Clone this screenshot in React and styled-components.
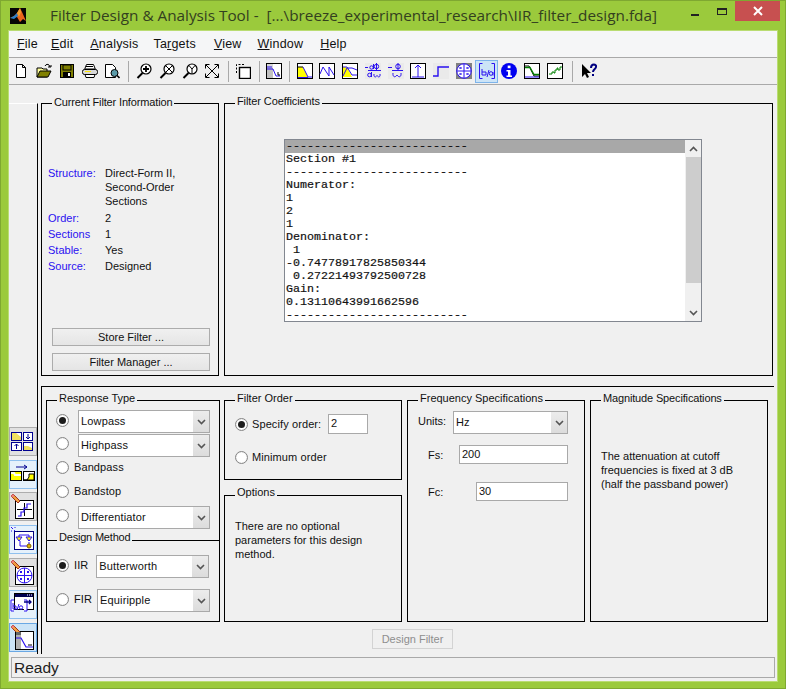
import React from "react";
import styled, { createGlobalStyle } from "styled-components";

const GlobalStyle = createGlobalStyle`
  html, body { margin: 0; padding: 0; background: #9bca3c; }
  body { font-family: "Liberation Sans", Arial, sans-serif; font-size: 11px; color: #111; }
`;

const BLUE = "#2a10f0";

const Frame = styled.div`
  width: 786px;
  height: 689px;
  box-sizing: border-box;
  background: #9bca3c;
  border: 1px solid #7fa831;
  display: flex;
  flex-direction: column;
  overflow: hidden;
`;

const TitleBar = styled.div`
  height: 29px;
  flex: none;
  display: flex;
  align-items: flex-start;
  padding-left: 9px;
`;

const Logo = styled.svg`
  margin-top: 7px;
  flex: none;
`;

const TitleText = styled.div`
  margin-left: 24px;
  margin-top: 3px;
  font-family: "Open Sans", sans-serif;
  font-size: 15.3px;
  line-height: 22px;
  color: #33401f;
  white-space: pre;
  flex: 1;
`;

const Controls = styled.div`
  display: flex;
  align-items: flex-start;
  margin-right: 5px;
`;

const Minimize = styled.div`
  width: 8px;
  height: 2px;
  background: #222;
  margin: 13px 18px 0 0;
`;

const Maximize = styled.div`
  width: 8px;
  height: 4px;
  border: 1px solid #222;
  border-top-width: 2px;
  margin: 7px 8px 0 0;
`;

const CloseBox = styled.div`
  width: 45px;
  height: 20px;
  background: #c75050;
  display: flex;
  align-items: center;
  justify-content: center;
`;

const Client = styled.div`
  flex: 1;
  margin: 0 7px 6px 7px;
  border: 1px solid #b9dc72;
  background: #f0f0f0;
  display: flex;
  flex-direction: column;
  min-height: 0;
`;

const MenuBar = styled.div`
  height: 26px;
  flex: none;
  display: flex;
  align-items: center;
  background: #f5f6f7;
  border-bottom: 1px solid #a9a9a9;
  font-size: 12.5px;
  color: #111;
`;

const MenuItem = styled.span`
  margin-left: ${(p) => p.$left}px;
  letter-spacing: 0.2px;
`;

const ToolBar = styled.div`
  height: 26px;
  flex: none;
  display: flex;
  align-items: center;
  padding-left: 1px;
  border-bottom: 1px solid #a9a9a9;
`;

const ToolButton = styled.div`
  width: 22.75px;
  height: 23px;
  box-sizing: border-box;
  flex: none;
  display: flex;
  align-items: center;
  justify-content: center;
  border: 1px solid ${(p) => (p.$active ? "#7eb4ea" : "transparent")};
  background: ${(p) => (p.$active ? "#cce4f7" : "transparent")};
`;

const ToolSep = styled.div`
  width: 1px;
  height: 21px;
  flex: none;
  background: #a9a9a9;
  margin-left: ${(p) => p.$before}px;
  margin-right: ${(p) => p.$after}px;
`;

const Body = styled.div`
  flex: 1;
  display: flex;
  padding-top: 18px;
  min-height: 0;
`;

const SideRail = styled.div`
  width: 28px;
  height: 548px;
  padding-bottom: 2px;
  flex: none;
  border-top: 1px solid #fff;
  border-right: 1px solid #000;
  box-sizing: content-box;
  display: flex;
  flex-direction: column;
  justify-content: flex-end;
  gap: 3.67px;
`;

const SideButton = styled.div`
  width: 28px;
  height: 29px;
  box-sizing: border-box;
  flex: none;
  border: 1px solid ${(p) => (p.$strong ? "#6aa8e4" : p.$active ? "#8fc0ee" : "#adadad")};
  background: ${(p) => (p.$strong ? "#cce4f7" : p.$active ? "#e5f1fb" : "#e1e1e1")};
  display: flex;
  align-items: center;
  justify-content: center;
`;

const Content = styled.div`
  margin-left: 3px;
  width: 733px;
  display: flex;
  flex-direction: column;
`;

const TopRow = styled.div`
  display: grid;
  grid-template-columns: 178px 549px;
  column-gap: 5px;
  height: 273px;
`;

const Panel = styled.div`
  position: relative;
  box-sizing: border-box;
  border: 1px solid #000;
  display: flex;
  flex-direction: column;
`;

const PanelTitle = styled.span`
  position: absolute;
  top: ${(p) => p.$top ?? -10}px;
  left: 10px;
  padding: 0 2px;
  background: #f0f0f0;
  line-height: 14px;
  white-space: nowrap;
  letter-spacing: ${(p) => p.$spacing || 0}px;
`;

const InfoPanel = styled(Panel)`
  padding: 62px 8px 4px 6px;
`;

const InfoGrid = styled.div`
  display: grid;
  grid-template-columns: 57px 1fr;
  row-gap: 2px;
  line-height: 14px;
`;

const InfoLabel = styled.span`
  color: ${BLUE};
`;

const InfoValue = styled.span`
  margin-bottom: ${(p) => p.$after || 0}px;
`;

const ActionButton = styled.div`
  width: 158px;
  height: 18px;
  margin-left: 4px;
  margin-top: ${(p) => p.$top};
  box-sizing: border-box;
  border: 1px solid #acacac;
  background: linear-gradient(#f0f0f0, #e5e5e5);
  display: flex;
  align-items: center;
  justify-content: center;
`;

const CoeffPanel = styled(Panel)`
  padding: 35px 0 0 59px;
`;

const ListBox = styled.div`
  width: 418px;
  height: 183px;
  box-sizing: border-box;
  border: 1px solid #828790;
  background: #fff;
  display: flex;
`;

const ListRows = styled.div`
  flex: 1;
  min-width: 0;
`;

const ListRow = styled.div`
  height: 13px;
  line-height: 13px;
  padding-left: 1px;
  font-family: "Liberation Mono", "Courier New", monospace;
  font-size: 11.67px;
  font-weight: 400;
  -webkit-text-stroke: 0.2px #111;
  white-space: pre;
  background: ${(p) => (p.$selected ? "#a8a8a8" : "transparent")};
`;

const ScrollBar = styled.div`
  width: 16px;
  flex: none;
  background: #f0f0f0;
  display: flex;
  flex-direction: column;
  align-items: center;
`;

const ScrollArrow = styled.div`
  height: 17px;
  flex: none;
  display: flex;
  align-items: center;
  justify-content: center;
  margin-top: ${(p) => p.$top || 0}px;
`;

const ScrollThumb = styled.div`
  width: 15px;
  height: 127px;
  background: #cdcdcd;
`;

const DesignPanel = styled.div`
  margin-top: 10px;
  flex: 1;
  box-sizing: border-box;
  border-top: 1px solid #000;
  border-left: 1px solid #000;
  padding: 13px 0 0 4px;
  width: 733px;
`;

const DesignGrid = styled.div`
  display: grid;
  grid-template-columns: 173px repeat(3, 178px);
  column-gap: 5px;
  height: 222px;
  margin-right: 5px;
`;

const ResponseBox = styled(Panel)`
  margin-right: -1px;
`;

const ResponseRows = styled.div`
  height: 140px;
  box-sizing: border-box;
  flex: none;
  padding: 9px 0 0 9px;
  display: flex;
  flex-direction: column;
  gap: 1px;
  border-bottom: 1px solid #000;
`;

const RadioRow = styled.div`
  height: 23px;
  display: flex;
  align-items: flex-start;
  line-height: 19px;
`;

const MethodRow = styled(RadioRow)`
  line-height: 21px;
`;

const Radio = styled.span`
  width: 13px;
  height: 13px;
  box-sizing: border-box;
  flex: none;
  margin-top: ${(p) => p.$top ?? 3}px;
  border-radius: 50%;
  border: 1px solid #858585;
  background: #fff;
  box-shadow: inset 0 0 1px #bbb;
  display: flex;
  align-items: center;
  justify-content: center;

  &::after {
    content: "";
    display: ${(p) => (p.$on ? "block" : "none")};
    width: 7px;
    height: 7px;
    border-radius: 50%;
    background: #1c1c1c;
  }
`;

const RadioLabel = styled.span`
  margin-left: 5px;
  letter-spacing: 0.1px;
`;

const Select = styled.div`
  width: ${(p) => p.$w}px;
  height: 23px;
  margin-left: ${(p) => p.$left || 0}px;
  box-sizing: border-box;
  flex: none;
  border: 1px solid #a9a9a9;
  background: #fff;
  display: flex;
  align-items: center;
  padding-left: 2px;
  line-height: 20px;
`;

const SelectText = styled.span`
  flex: 1;
  padding-bottom: 1px;
  letter-spacing: 0.15px;
`;

const SelectArrow = styled.span`
  width: 16px;
  height: 100%;
  background: linear-gradient(#ececec, #dcdcdc);
  display: flex;
  align-items: center;
  justify-content: center;
`;

const MethodSection = styled.div`
  position: relative;
  padding: 14px 0 0 9px;
  display: flex;
  flex-direction: column;
  gap: 11px;
`;

const MiddleColumn = styled.div`
  display: flex;
  flex-direction: column;
  gap: 15px;
`;

const OrderBox = styled(Panel)`
  height: 80px;
  padding: 13px 0 0 10px;
  gap: 13px;
`;

const OrderRow = styled.div`
  height: 20px;
  display: flex;
  align-items: center;
`;

const OrderLabel = styled.span`
  margin-left: 4px;
  width: 76px;
  letter-spacing: 0.1px;
`;

const TextInput = styled.div`
  width: ${(p) => p.$w}px;
  height: ${(p) => p.$h}px;
  box-sizing: border-box;
  flex: none;
  border: 1px solid #a9a9a9;
  background: #fff;
  padding-left: 2px;
  line-height: 16px;
`;

const NoteBox = styled(Panel)`
  flex: 1;
  padding: ${(p) => p.$top}px 4px 0 10px;
  line-height: 14px;
`;

const FreqBox = styled(Panel)`
  padding: 10px 16px 0 10px;
`;

const FreqRow = styled.div`
  display: flex;
  justify-content: space-between;
  align-items: flex-start;
  margin-top: ${(p) => p.$top || 0}px;
`;

const FreqLabel = styled.span`
  margin-left: ${(p) => p.$left || 0}px;
  margin-top: ${(p) => p.$drop}px;
  line-height: 14px;
`;

const ButtonRow = styled.div`
  padding: 7px 0 0 326px;
`;

const DisabledButton = styled.div`
  width: 81px;
  height: 20px;
  box-sizing: border-box;
  border: 1px solid #d3d3d3;
  color: #8e8e8e;
  display: flex;
  align-items: center;
  justify-content: center;
`;

const StatusBar = styled.div`
  flex: none;
  height: 21px;
  box-sizing: border-box;
  margin: 3px 2px 3px 2px;
  border: 1px solid #a9a9a9;
  font-size: 15.5px;
  line-height: 19px;
  padding-left: 2px;
  color: #222;
`;

const IconSvg = styled.svg`
  display: block;
  flex: none;
`;

const Ico = ({ children }) => (
  <IconSvg width={16} height={16} viewBox="0 0 16 16" fill="none">
    {children}
  </IconSvg>
);

// side icons are drawn in button coordinates, the 1px border is taken off here
const SideIco = ({ children }) => (
  <IconSvg width={26} height={27} viewBox="1 1 26 27" fill="none">
    {children}
  </IconSvg>
);

const Box = () => <rect x="0.5" y="0.5" width="15" height="15" fill="#fff" stroke="#000" />;

const Chevron = ({ up }) => (
  <svg width="9" height="6" viewBox="0 0 9 6" fill="none">
    <path d={up ? "M1 5l3.5-3.5L8 5" : "M1 1l3.5 3.5L8 1"} stroke="#555" strokeWidth="1.6" />
  </svg>
);

const Lens = ({ children }) => (
  <>
    <circle cx="10" cy="6" r="5" fill="#fff" stroke="#000" strokeWidth="1.2" />
    <path d="M6.5 10L1.5 15" stroke="#000" strokeWidth="2" />
    {children}
  </>
);

const toolIcons = {
  file: <path d="M3.5 1.5h6l3 3v10h-9zM9.5 1.5v3h3" fill="#fff" stroke="#000" />,
  open: (
    <>
      <path d="M1 14V5h5l1 1h4v8z" fill="#ffff9c" stroke="#000" />
      <path d="M1 14l3-6h11l-3 6z" fill="#808000" stroke="#000" />
      <path d="M9 3c1-2 3-2 4-1l1 2M12 4h3V2" stroke="#000" />
    </>
  ),
  save: (
    <>
      <rect x="1.5" y="1.5" width="13" height="13" fill="#808000" stroke="#000" />
      <rect x="4" y="2" width="8" height="5" fill="#808000" stroke="#000" />
      <rect x="4" y="9" width="8" height="5" fill="#000" />
      <rect x="9" y="10" width="2" height="3" fill="#fff" />
    </>
  ),
  print: (
    <>
      <path d="M4.5 1.5h7l2 5h-11z" fill="#fff" stroke="#000" />
      <path d="M3 6h10M4 3.5h7" stroke="#000" />
      <rect x="0.5" y="6.5" width="15" height="5" rx="2" fill="#d8d8d8" stroke="#000" />
      <path d="M3 11.5h10l-1 3H4z" fill="#fff" stroke="#000" />
      <path d="M3 8.5h6" stroke="#ffe600" />
    </>
  ),
  preview: (
    <>
      <path d="M1.5 1.5h7l3 3v10h-10z" fill="#fff" stroke="#000" />
      <circle cx="10.5" cy="10" r="3.5" fill="#5a9aa8" stroke="#000" />
      <path d="M13 12.5l2.5 2.5" stroke="#000" strokeWidth="1.6" />
    </>
  ),
  zoomPlus: (
    <Lens>
      <path d="M7 6h6M10 3v6" stroke="#000" strokeWidth="1.8" />
    </Lens>
  ),
  zoomX: (
    <Lens>
      <path d="M7 3l6 6M13 3l-6 6" stroke="#000" />
    </Lens>
  ),
  zoomY: (
    <Lens>
      <path d="M7 2.5l3 3.5 3-3.5M10 6v5" stroke="#000" />
    </Lens>
  ),
  full: (
    <path
      d="M2 2l12 12M14 2L2 14M1.5 5.5v-4h4M10.5 1.5h4v4M1.5 10.5v4h4M14.5 10.5v4h-4"
      stroke="#000"
    />
  ),
  copy: (
    <>
      <path d="M1.5 10V1.5H10" stroke="#000" strokeDasharray="2 1.5" />
      <rect x="4.5" y="4.5" width="11" height="11" fill="#fff" stroke="#000" strokeWidth="1.4" />
    </>
  ),
  fvtool: (
    <>
      <rect x="0.5" y="0.5" width="15" height="15" fill="#fff" stroke="#000" />
      <rect x="1" y="1" width="6" height="14" fill="#c0c0c0" />
      <rect x="1" y="1" width="6" height="4" fill="#d8d8d8" />
      <path d="M1 6h6l3 7h4" stroke={BLUE} />
      <path d="M1 4h5" stroke={BLUE} />
      <path d="M12 9v3h2" stroke="#000" />
    </>
  ),
  mag: (
    <>
      <Box />
      <path d="M1 4h5l5 10H1z" fill="#ffff00" />
      <path d="M1 4h5" stroke="#000" />
      <path d="M6 4l5 10h4M1 14.5h10" stroke={BLUE} />
    </>
  ),
  phase: (
    <>
      <Box />
      <path d="M1 11L4 4l6 9V4l5 8" stroke={BLUE} />
    </>
  ),
  magPhase: (
    <>
      <Box />
      <path d="M1 4h4l5 10H1z" fill="#ffff00" />
      <path d="M1 4h4l5 8h5M1 13l4-8h5l5 2" stroke={BLUE} />
    </>
  ),
  delay: (
    <>
      <rect width="16" height="16" fill="#eaeaea" />
      <path d="M3 7.5h13M0 4.5h3M8.5 1v5M11.5 0v7" stroke={BLUE} />
      <circle cx="6.5" cy="4.5" r="1.7" stroke={BLUE} />
      <circle cx="11.5" cy="3.5" r="2.2" stroke={BLUE} />
      <circle cx="4.5" cy="12" r="1.8" stroke={BLUE} />
      <path d="M6.5 9v5M9 11c-.5 3 1.5 4 3 1.5 1.5 2.5 3.5 1.5 3-1.5" stroke={BLUE} />
    </>
  ),
  phaseDelay: (
    <>
      <rect width="16" height="16" fill="#eaeaea" />
      <path d="M4 7.5h11M0 4.5h4M10 0v7" stroke={BLUE} />
      <circle cx="10" cy="3.5" r="2.3" stroke={BLUE} />
      <path d="M5 10c-.5 4 2 5 4 2 2 3 4.5 2 4-2" stroke={BLUE} />
    </>
  ),
  impulse: (
    <>
      <Box />
      <path d="M8 14V2M5 5l3-3 3 3M2 14h12" stroke={BLUE} />
    </>
  ),
  step: (
    <>
      <rect width="16" height="16" fill="#eaeaea" />
      <path d="M0 13h5V4h11" stroke={BLUE} strokeWidth="1.4" />
    </>
  ),
  poleZero: (
    <>
      <rect width="16" height="16" fill="#808080" />
      <circle cx="8" cy="8" r="7.2" fill="#fff" stroke={BLUE} />
      <path d="M0.5 8h15M8 0.5v15" stroke={BLUE} />
      <path d="M3.5 4l2 2M5.5 4l-2 2M10.5 4l2 2M12.5 4l-2 2M3.5 10l2 2M5.5 10l-2 2M10.5 10l2 2M12.5 10l-2 2" stroke={BLUE} />
    </>
  ),
  coeffs: (
    <>
      <path d="M3.5 0.5h-3v15h3M12.5 0.5h3v15h-3" stroke={BLUE} />
      <path d="M3 6v6h4V9H3M8 14l2-7" stroke={BLUE} />
      <circle cx="12" cy="10.5" r="1.8" stroke={BLUE} />
      <path d="M14 9v3.5" stroke={BLUE} />
    </>
  ),
  info: (
    <>
      <circle cx="8" cy="8" r="8" fill="#0000f0" />
      <rect x="6.7" y="2.6" width="2.8" height="2.6" fill="#fff" />
      <path d="M5.5 7h4v5.5H11V14H5.5v-1.5H7V8.5H5.5z" fill="#fff" />
    </>
  ),
  magEstimate: (
    <>
      <Box />
      <path d="M1 3h4l5 10h5" stroke="#000" />
      <path d="M1 4.5h5l4 7h5" stroke="#008000" strokeWidth="1.3" />
      <path d="M1 14h14" stroke={BLUE} />
    </>
  ),
  noise: (
    <>
      <Box />
      <path d="M2 11h3V9h2v1h1V7h2V5h1v2h2V4h2" stroke="#008000" />
    </>
  ),
  help: (
    <>
      <path d="M1 1v13l3-3 2 4 2-1-2-4h4z" fill="#000" />
      <path d="M10 5c0-5 6-4 5-1 0 2-3 2-3 5M12 11v2" stroke="#000080" strokeWidth="2" />
    </>
  ),
};

const Pencil = () => (
  <>
    <path d="M2 4l2-2 7 7-2 2z" fill="#f0a040" stroke="#a03020" />
    <path d="M2 4l2-2 1.5 1.5-2 2z" fill="#f08080" />
  </>
);

const sideIcons = [
  <SideIco key="1">
    <g stroke="#000090">
      <rect x="2.5" y="5.5" width="10" height="8" fill="#fff" />
      <rect x="14.5" y="5.5" width="9" height="8" fill="#fff" />
      <rect x="2.5" y="15.5" width="10" height="8" fill="#fff" />
      <rect x="14.5" y="15.5" width="9" height="8" fill="#fff" />
    </g>
    <path d="M3 6h4l5 4v3H3zM15 19h4l4 2v2h-8z" fill="#f0e060" />
    <path d="M19 7v5M17 10l2 2 2-2M7.5 22v-5M5.5 19l2-2 2 2" stroke="#000090" />
  </SideIco>,
  <SideIco key="2">
    <path d="M7 7h11M15 5l3 2-3 2" stroke="#000090" />
    <rect x="1.5" y="11.5" width="11" height="9" fill="#ffff00" stroke="#000" />
    <path d="M2 13h3l1 2h6" stroke="#fff" strokeWidth="2" />
    <rect x="14.5" y="11.5" width="11" height="9" fill="#fff" stroke="#000" />
    <path d="M15 20h3l2-3v-3h5v6z" stroke="#000" fill="#ffff00" />
  </SideIco>,
  <SideIco key="3">
    <rect x="6.5" y="8.5" width="18" height="18" fill="#fff" stroke="#000" />
    <Pencil />
    <path d="M8 17.5h15M15.5 11v13" stroke="#000" />
    <path d="M9 24h3v-4h3v-4h3v-4h4" stroke={BLUE} strokeWidth="1.2" />
  </SideIco>,
  <SideIco key="4">
    <rect x="5.5" y="6.5" width="19" height="18" fill="#fff" stroke="#000080" />
    <path d="M10 10h10M10 10v4M20 10v4M11 16v5h8M20 17v3" stroke={BLUE} />
    <path d="M7 12h6l-3 4zM17 12h6l-3 4z" fill="#ffff00" stroke={BLUE} />
    <circle cx="20" cy="21" r="2" fill="#e0b000" stroke="#806000" />
    <path d="M2 2l2 2M6 2v1M2 6h1M5 5l1 1" stroke={BLUE} />
  </SideIco>,
  <SideIco key="5">
    <rect x="6.5" y="8.5" width="18" height="18" fill="#fff" stroke="#000" />
    <Pencil />
    <circle cx="15.5" cy="17.5" r="7.5" stroke={BLUE} />
    <path d="M8 17.5h15M15.5 10v15M11 13l2 2M13 13l-2 2M18 13l2 2M20 13l-2 2M11 20l2 2M13 20l-2 2M18 20l2 2M20 20l-2 2" stroke={BLUE} />
  </SideIco>,
  <SideIco key="6">
    <rect x="5.5" y="3.5" width="19" height="16" fill="#fff" stroke="#000" />
    <rect x="6" y="4" width="18" height="3" fill="#000050" />
    <path d="M18 5h1M20 5h1M22 5h1" stroke="#fff" />
    <path d="M5 10H2v11h3M15 10h3v11h-3" stroke={BLUE} fill="#fff" />
    <path d="M4 13v6h3v-3H4M8 20l2-6" stroke={BLUE} />
    <circle cx="12" cy="17.5" r="1.7" stroke={BLUE} />
    <path d="M15 12h7M20 10l2 2-2 2" stroke="#000080" strokeWidth="1.3" />
  </SideIco>,
  <SideIco key="7">
    <rect x="6.5" y="8.5" width="18" height="18" fill="#fff" stroke="#000" />
    <Pencil />
    <rect x="7" y="12" width="5" height="14" fill="#b0b0b0" />
    <rect x="7" y="9" width="5" height="3" fill="#666" />
    <path d="M7 15h5l5 9h7" stroke={BLUE} strokeWidth="1.2" />
    <path d="M19 21h4v2h-4z" fill="#808080" />
  </SideIco>,
];

const menus = [
  { left: 8, key: "F", rest: "ile" },
  { left: 13, key: "E", rest: "dit" },
  { left: 17, key: "A", rest: "nalysis" },
  { left: 15, pre: "Ta", key: "r", rest: "gets" },
  { left: 18, key: "V", rest: "iew" },
  { left: 16, key: "W", rest: "indow" },
  { left: 17, key: "H", rest: "elp" },
];

const toolGroups = [
  { icons: ["file", "open", "save", "print", "preview"], before: 4, after: 4 },
  { icons: ["zoomPlus", "zoomX", "zoomY", "full"], before: 4, after: 3 },
  { icons: ["copy"], before: 4, after: 3 },
  { icons: ["fvtool"], before: 4, after: 3 },
  {
    icons: ["mag", "phase", "magPhase", "delay", "phaseDelay", "impulse", "step", "poleZero", "coeffs", "info", "magEstimate", "noise"],
    before: 6,
    after: 4,
  },
  { icons: ["help"] },
];

const coeffLines = [
  "--------------------------",
  "Section #1",
  "--------------------------",
  "Numerator:",
  "1",
  "2",
  "1",
  "Denominator:",
  " 1",
  "-0.74778917825850344",
  " 0.27221493792500728",
  "Gain:",
  "0.13110643991662596",
  "--------------------------",
];

const infoRows = [
  ["Structure:", <>Direct-Form II,<br />Second-Order<br />Sections</>, 1],
  ["Order:", "2"],
  ["Sections", "1"],
  ["Stable:", "Yes"],
  ["Source:", "Designed"],
];

const DropDown = ({ w, left, children }) => (
  <Select $w={w} $left={left}>
    <SelectText>{children}</SelectText>
    <SelectArrow>
      <Chevron />
    </SelectArrow>
  </Select>
);

export default function App() {
  return (
    <Frame>
      <GlobalStyle />
      <TitleBar>
        <Logo width="16" height="16" viewBox="0 0 16 16">
          <rect width="16" height="16" fill="#050505" />
          <path d="M0 10l4-2 3-3 3-5 2 4 4 9-3-2-3 3-3-5z" fill="#e8641b" />
          <path d="M0 10l4-2 3-3 1 3-4 3z" fill="#2a7fc8" />
          <path d="M7 5l3-5 1 4-2 5z" fill="#f0a030" />
        </Logo>
        <TitleText>{"Filter Design & Analysis Tool -  [...\\breeze_experimental_research\\IIR_filter_design.fda]"}</TitleText>
        <Controls>
          <Minimize />
          <Maximize />
          <CloseBox>
            <svg width="10" height="10" viewBox="0 0 10 10">
              <path d="M1 1l8 8M9 1l-8 8" stroke="#fff" strokeWidth="2" />
            </svg>
          </CloseBox>
        </Controls>
      </TitleBar>
      <Client>
        <MenuBar>
          {menus.map((m) => (
            <MenuItem $left={m.left} key={m.key}>
              {m.pre}
              <u>{m.key}</u>
              {m.rest}
            </MenuItem>
          ))}
        </MenuBar>
        <ToolBar>
          {toolGroups.map((group, i) => (
            <React.Fragment key={i}>
              {group.icons.map((name) => (
                <ToolButton key={name} $active={name === "coeffs"}>
                  <Ico>{toolIcons[name]}</Ico>
                </ToolButton>
              ))}
              {group.before !== undefined && <ToolSep $before={group.before} $after={group.after} />}
            </React.Fragment>
          ))}
        </ToolBar>
        <Body>
          <SideRail>
            {sideIcons.map((icon, i) => (
              <SideButton key={i} $active={i === 1 || i === 3 || i === 5} $strong={i === 6}>
                {icon}
              </SideButton>
            ))}
          </SideRail>
          <Content>
            <TopRow>
              <InfoPanel>
                <PanelTitle $top={-9} $spacing={-0.15}>Current Filter Information</PanelTitle>
                <InfoGrid>
                  {infoRows.map(([label, value, after]) => (
                    <React.Fragment key={label}>
                      <InfoLabel>{label}</InfoLabel>
                      <InfoValue $after={after}>{value}</InfoValue>
                    </React.Fragment>
                  ))}
                </InfoGrid>
                <ActionButton $top="auto">Store Filter ...</ActionButton>
                <ActionButton $top="7px">Filter Manager ...</ActionButton>
              </InfoPanel>
              <CoeffPanel>
                <PanelTitle $spacing={-0.1}>Filter Coefficients</PanelTitle>
                <ListBox>
                  <ListRows>
                    {coeffLines.map((line, i) => (
                      <ListRow key={i} $selected={i === 0}>
                        {line}
                      </ListRow>
                    ))}
                  </ListRows>
                  <ScrollBar>
                    <ScrollArrow>
                      <Chevron up />
                    </ScrollArrow>
                    <ScrollThumb />
                    <ScrollArrow $top={21}>
                      <Chevron />
                    </ScrollArrow>
                  </ScrollBar>
                </ListBox>
              </CoeffPanel>
            </TopRow>
            <DesignPanel>
              <DesignGrid>
                <ResponseBox>
                  <PanelTitle>Response Type</PanelTitle>
                  <ResponseRows>
                    <RadioRow>
                      <Radio $on $top={4} />
                      <DropDown w={132} left={9}>Lowpass</DropDown>
                    </RadioRow>
                    <RadioRow>
                      <Radio />
                      <DropDown w={132} left={9}>Highpass</DropDown>
                    </RadioRow>
                    <RadioRow>
                      <Radio />
                      <RadioLabel>Bandpass</RadioLabel>
                    </RadioRow>
                    <RadioRow>
                      <Radio />
                      <RadioLabel>Bandstop</RadioLabel>
                    </RadioRow>
                    <RadioRow>
                      <Radio />
                      <DropDown w={132} left={9}>Differentiator</DropDown>
                    </RadioRow>
                  </ResponseRows>
                  <MethodSection>
                    <PanelTitle $top={-11} $spacing={-0.2}>Design Method</PanelTitle>
                    <MethodRow>
                      <Radio $on $top={4} />
                      <RadioLabel>IIR</RadioLabel>
                      <DropDown w={113} left={8}>Butterworth</DropDown>
                    </MethodRow>
                    <MethodRow>
                      <Radio $top={4} />
                      <RadioLabel>FIR</RadioLabel>
                      <DropDown w={113} left={5}>Equiripple</DropDown>
                    </MethodRow>
                  </MethodSection>
                </ResponseBox>
                <MiddleColumn>
                  <OrderBox>
                    <PanelTitle>Filter Order</PanelTitle>
                    <OrderRow>
                      <Radio $on $top={0} />
                      <OrderLabel>Specify order:</OrderLabel>
                      <TextInput $w={40} $h={20}>2</TextInput>
                    </OrderRow>
                    <OrderRow>
                      <Radio $top={0} />
                      <OrderLabel>Minimum order</OrderLabel>
                    </OrderRow>
                  </OrderBox>
                  <NoteBox $top={23}>
                    <PanelTitle $top={-11}>Options</PanelTitle>
                    <span>There are no optional<br />parameters for this design<br />method.</span>
                  </NoteBox>
                </MiddleColumn>
                <FreqBox>
                  <PanelTitle>Frequency Specifications</PanelTitle>
                  <FreqRow>
                    <FreqLabel $drop={3}>Units:</FreqLabel>
                    <DropDown w={115}>Hz</DropDown>
                  </FreqRow>
                  <FreqRow $top={11}>
                    <FreqLabel $left={10} $drop={3}>Fs:</FreqLabel>
                    <TextInput $w={109} $h={19}>200</TextInput>
                  </FreqRow>
                  <FreqRow $top={18}>
                    <FreqLabel $left={10} $drop={3}>Fc:</FreqLabel>
                    <TextInput $w={92} $h={19}>30</TextInput>
                  </FreqRow>
                </FreqBox>
                <NoteBox $top={48}>
                  <PanelTitle $spacing={-0.15}>Magnitude Specifications</PanelTitle>
                  <span>The attenuation at cutoff<br />frequencies is fixed at 3 dB<br />(half the passband power)</span>
                </NoteBox>
              </DesignGrid>
              <ButtonRow>
                <DisabledButton>Design Filter</DisabledButton>
              </ButtonRow>
            </DesignPanel>
          </Content>
        </Body>
        <StatusBar>Ready</StatusBar>
      </Client>
    </Frame>
  );
}
